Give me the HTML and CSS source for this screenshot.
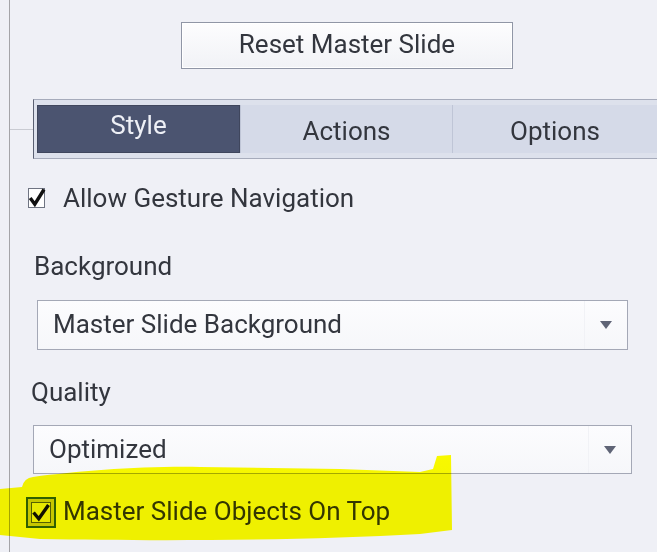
FILE: index.html
```html
<!DOCTYPE html>
<html lang="en">
<head>
<meta charset="utf-8">
<title>Slide Properties</title>
<link rel="stylesheet" href="styles.css">
</head>
<body>
<div class="panel">
  <div class="cut-title">Slide</div>
  <div class="btn-row"><button class="btn" type="button">Reset Master Slide</button></div>
  <div class="tab-row">
    <div class="tab-lead"></div>
    <div class="tabbar">
      <div class="tab tab-active">Style</div>
      <div class="tab tab-actions">Actions</div>
      <div class="tab tab-options">Options</div>
    </div>
  </div>
  <div class="check-row row-gesture">
    <span class="checkbox cb-small">
      <svg class="check-svg" viewBox="0 0 17 20" width="17" height="20"><path d="M2.2 10 L6.8 16.2 L16 1.5" fill="none" stroke="#111" stroke-width="3.4" stroke-linejoin="miter"/></svg>
    </span>
    <span class="check-text">Allow Gesture Navigation</span>
  </div>
  <div class="field-label label-bg">Background</div>
  <div class="select select-bg">
    <span class="select-text">Master Slide Background</span>
    <span class="select-arrow"><svg viewBox="0 0 12 8" width="12" height="8"><path d="M0 0 H12 L6 8 Z" fill="#5f6476"/></svg></span>
  </div>
  <div class="field-label label-quality">Quality</div>
  <div class="select select-quality">
    <span class="select-text">Optimized</span>
    <span class="select-arrow"><svg viewBox="0 0 12 8" width="12" height="8"><path d="M0 0 H12 L6 8 Z" fill="#5f6476"/></svg></span>
  </div>
  <div class="check-row row-master">
    <span class="checkbox cb-focus">
      <span class="cb-inner">
        <svg class="check-svg" viewBox="0 0 18 18" width="18" height="18"><path d="M1.5 8.5 L6.8 14.8 L16.5 1" fill="none" stroke="#111" stroke-width="3.4"/></svg>
      </span>
    </span>
    <span class="check-text">Master Slide Objects On Top</span>
  </div>
</div>
<svg class="highlight" viewBox="0 0 657 552" width="657" height="552" aria-hidden="true">
  <path d="M0 489 L22 487 Q24 478 33 477 C 80 471, 140 466, 200 467 L 340 469 L 420 472 L 433 469 L 437 456 L 451 455 L 452 530 L 420 534 C 300 541, 150 541, 40 539 L 0 535 Z" fill="#ffff00"/>
</svg>
</body>
</html>
```

FILE: styles.css
```css
html {
  background: #eff0f6;
}

body {
  margin: 0;
  font-family: Roboto, "Liberation Sans", sans-serif;
  font-size: 26px;
  line-height: 30px;
  color: #33363e;
}

.panel {
  display: flow-root;
  margin-left: 9px;
  border-left: 1px solid #a4a4a8;
  min-height: 552px;
  box-sizing: border-box;
}

.cut-title {
  margin-top: -21px;
  height: 25px;
  line-height: 25px;
  padding-left: 315px;
  color: #8c909a;
}

.btn-row {
  margin-top: 18px;
  padding-left: 171px;
  display: flex;
}

.btn {
  width: 332px;
  height: 47px;
  box-sizing: border-box;
  border: 1px solid #9096a6;
  box-shadow: inset 0 0 0 1px #ffffff;
  background: linear-gradient(#fdfdfe, #f1f2f6);
  font: inherit;
  color: #33363e;
  padding: 0 0 3px;
}

.tab-row {
  margin-top: 30px;
  display: flex;
  align-items: center;
}

.tab-lead {
  width: 23px;
  height: 1px;
  background: #c9cbd2;
}

.tabbar {
  flex: 1;
  display: flex;
  height: 60px;
  box-sizing: border-box;
  padding: 5px 0 5px 3px;
  border: 1px solid #a6abbb;
  border-right: none;
  border-left-color: #5a6072;
  background: #dde1ec;
}

.tab {
  display: flex;
  align-items: center;
  justify-content: center;
  box-sizing: border-box;
  background: #d5dae8;
}

.tab-active {
  width: 203px;
  background: #4b5470;
  color: #eef0f6;
  padding-bottom: 9px;
  border: 1px solid #3f465d;
}

.tab-actions {
  width: 212px;
  padding-top: 4px;
  border-left: 1px solid #bfc5d6;
}

.tab-options {
  flex: 1;
  padding-top: 4px;
  border-left: 1px solid #bfc5d6;
}

.check-row {
  display: flex;
  align-items: center;
}

.row-gesture {
  margin-top: 24px;
  padding-left: 18px;
}

.checkbox {
  display: flex;
  align-items: center;
  justify-content: center;
  box-sizing: border-box;
  flex: none;
  position: relative;
}

.check-svg {
  overflow: visible;
}

.cb-small {
  width: 17px;
  height: 20px;
  border: 1px solid #6f7482;
  background: #ffffff;
  margin-right: 18px;
}

.cb-small .check-svg {
  position: absolute;
  left: -1px;
  top: -1px;
}

.field-label {
  margin-top: 38px;
}

.label-bg {
  padding-left: 24px;
}

.label-quality {
  margin-top: 27px;
  padding-left: 21px;
}

.select {
  display: flex;
  align-items: center;
  box-sizing: border-box;
  border: 1px solid #a4a8b6;
  background: linear-gradient(#fcfcfe, #f6f7fa);
}

.select-bg {
  margin-top: 19px;
  margin-left: 27px;
  width: 591px;
  height: 50px;
}

.select-quality {
  margin-top: 18px;
  margin-left: 23px;
  width: 599px;
  height: 49px;
}

.select-text {
  flex: 1;
  padding-left: 15px;
  padding-bottom: 2px;
}

.select-arrow {
  width: 42px;
  align-self: stretch;
  display: flex;
  align-items: center;
  justify-content: center;
  border-left: 1px solid #f1f2f6;
}

.row-master {
  margin-top: 22px;
  padding-left: 16px;
  align-items: flex-start;
}

.cb-focus {
  width: 30px;
  height: 31px;
  margin-top: 1px;
  margin-right: 7px;
  border: 2px solid #2f5f8c;
  padding: 3px;
  background: #c6c7cf;
}

.cb-inner {
  flex: 1;
  align-self: stretch;
  display: flex;
  align-items: center;
  justify-content: center;
  border: 1px solid #55607a;
  background: #e7e8ee;
}

.highlight {
  position: absolute;
  left: 0;
  top: 0;
  mix-blend-mode: multiply;
  pointer-events: none;
}
```
